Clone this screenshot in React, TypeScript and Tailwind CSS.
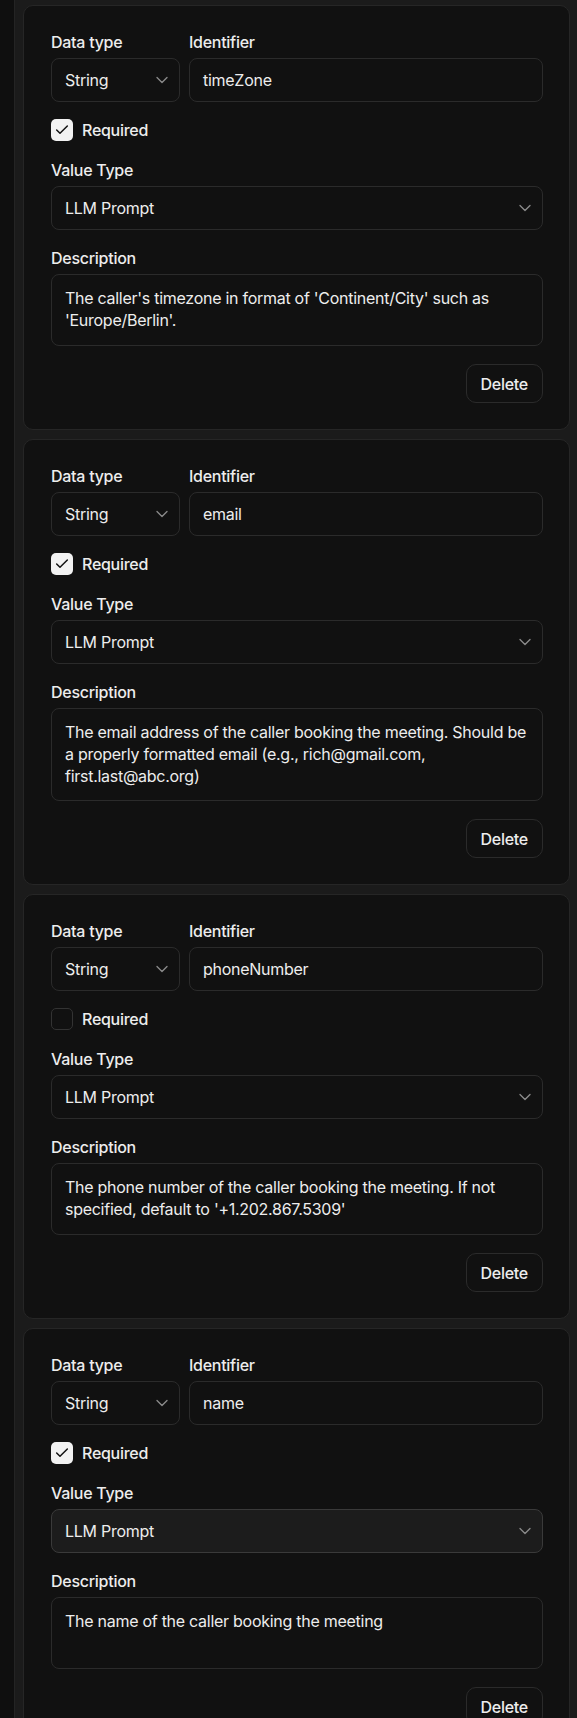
import React from "react";

type Item = {
  id: string;
  required: boolean;
  desc: string;
  active?: boolean;
};

const items: Item[] = [
  {
    id: "timeZone",
    required: true,
    desc: "The caller's timezone in format of 'Continent/City' such as\n'Europe/Berlin'.",
  },
  {
    id: "email",
    required: true,
    desc: "The email address of the caller booking the meeting. Should be\na properly formatted email (e.g., rich@gmail.com,\nfirst.last@abc.org)",
  },
  {
    id: "phoneNumber",
    required: false,
    desc: "The phone number of the caller booking the meeting. If not\nspecified, default to '+1.202.867.5309'",
  },
  {
    id: "name",
    required: true,
    desc: "The name of the caller booking the meeting",
    active: true,
  },
];

function Chevron() {
  return (
    <svg
      width="20"
      height="20"
      viewBox="0 0 24 24"
      fill="none"
      stroke="#8a8a8a"
      strokeWidth="1.6"
      strokeLinecap="round"
      strokeLinejoin="round"
    >
      <path d="m6 9 6 6 6-6" />
    </svg>
  );
}

function Label({ children }: { children: React.ReactNode }) {
  return <div className="h-6 text-[16px] leading-6 font-medium text-[#ededed]">{children}</div>;
}

function Card({ item }: { item: Item }) {
  return (
    <div className="rounded-[10px] border border-[#262626] bg-[#111111] pt-6 pb-[26px] pl-[27px] pr-[26px] flex flex-col">
      <div className="grid grid-cols-[129px_1fr] gap-x-[9px]">
        <div className="flex flex-col gap-1">
          <Label>Data type</Label>
          <div className="h-11 rounded-lg border border-[#2b2b2b] bg-[#111111] flex items-center justify-between pl-[13px] pr-[7px] text-[16px] text-[#ededed]">
            <span>String</span>
            <Chevron />
          </div>
        </div>
        <div className="flex flex-col gap-1">
          <Label>Identifier</Label>
          <div className="h-11 rounded-lg border border-[#2b2b2b] bg-[#111111] flex items-center px-[13px] text-[16px] text-[#ededed]">
            {item.id}
          </div>
        </div>
      </div>

      <div className="mt-4 h-6 flex items-center gap-[9px]">
        {item.required ? (
          <div className="w-[22px] h-[22px] rounded-[5px] bg-[#f2f2f2] flex items-center justify-center">
            <svg width="16" height="16" viewBox="0 0 24 24" fill="none" stroke="#111111" strokeWidth="2.2" strokeLinecap="round" strokeLinejoin="round">
              <path d="M20 6 9 17l-5-5" />
            </svg>
          </div>
        ) : (
          <div className="w-[22px] h-[22px] rounded-[5px] border border-[#333333] bg-[#111111]" />
        )}
        <span className="text-[16px] font-medium text-[#ededed]">Required</span>
      </div>

      <div className="mt-4 flex flex-col gap-1">
        <Label>Value Type</Label>
        <div
          className={
            item.active
              ? "h-11 rounded-lg border border-[#3a3a3a] bg-[#1c1c1c] flex items-center justify-between pl-[13px] pr-[7px] text-[16px] text-[#ededed]"
              : "h-11 rounded-lg border border-[#2b2b2b] bg-[#111111] flex items-center justify-between pl-[13px] pr-[7px] text-[16px] text-[#ededed]"
          }
        >
          <span>LLM Prompt</span>
          <Chevron />
        </div>
      </div>

      <div className="mt-4 flex flex-col gap-1">
        <Label>Description</Label>
        <div className="min-h-[72px] rounded-lg border border-[#2b2b2b] bg-[#111111] px-[13px] pt-3 pb-[13px] text-[16px] leading-[22px] text-[#ededed] whitespace-pre-line">
          {item.desc}
        </div>
      </div>

      <div className="mt-[18px] flex justify-end">
        <div className="h-[39px] rounded-[10px] border border-[#2b2b2b] bg-[#111111] px-[14px] flex items-center text-[16px] font-medium text-[#ededed]">
          Delete
        </div>
      </div>
    </div>
  );
}

export default function App() {
  return (
    <div
      className="flex min-h-[1718px] bg-[#1b1b1b] tracking-[-0.017em]"
      style={{ fontFamily: "Inter, 'Noto Sans', sans-serif" }}
    >
      <div className="w-[15px] shrink-0 bg-[#0f0f0f] border-r border-[#242424]" />
      <div className="flex-1 pt-[5px] pl-2 pr-[7px] flex flex-col gap-[9px]">
        {items.map((it) => (
          <Card key={it.id} item={it} />
        ))}
      </div>
    </div>
  );
}
